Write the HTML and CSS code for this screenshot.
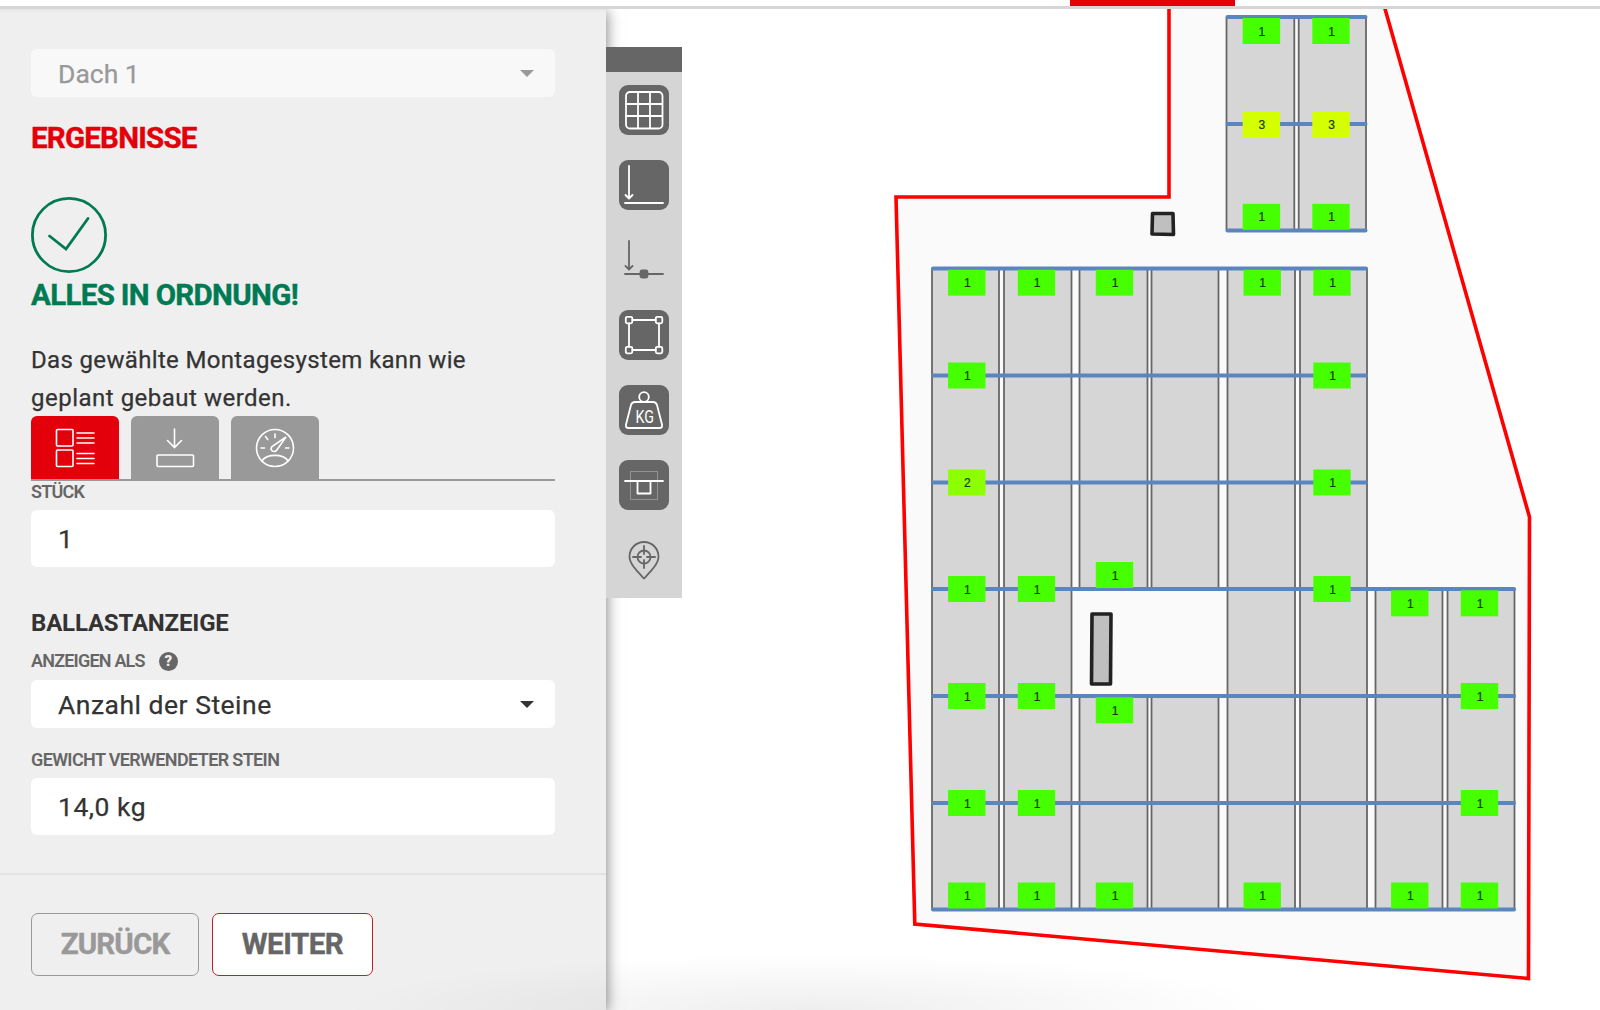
FILE: index.html
```html
<!DOCTYPE html>
<html lang="de">
<head>
<meta charset="utf-8">
<title>Ergebnisse</title>
<link rel="stylesheet" href="styles.css">
</head>
<body>
<header class="topbar"><div class="topbar-active"></div></header>
<div class="layout">
  <aside class="sidebar">
    <section class="results">
      <div class="field select disabled"><span class="t-dach">Dach 1</span><i class="caret"></i></div>
      <h1 class="title"><span class="t-erg">ERGEBNISSE</span></h1>
      <svg class="check" width="76" height="76" viewBox="0 0 76 76"><circle cx="38" cy="38" r="36.6"/><path d="M18.5 39 35 52 57 21.5"/></svg>
      <h2 class="status"><span class="t-ok">ALLES IN ORDNUNG!</span></h2>
      <p class="message"><span class="t-m1">Das gewählte Montagesystem kann wie</span><br><span class="t-m2">geplant gebaut werden.</span></p>
      <nav class="tabs">
        <a class="tab active"><svg width="40" height="40" viewBox="0 0 40 40"><rect x="1.5" y="1.500" width="16.500" height="16.500" rx="1"/><rect x="1.500" y="22" width="16.500" height="16.500" rx="1"/><path d="M22 5h17M22 10h17M22 15h17M22 25.500h17M22 30.500h17M22 35.500h17"/></svg></a>
        <a class="tab"><svg width="40" height="40" viewBox="0 0 40 40"><path d="M19.500 1v18M12.500 12.500l7 7 7-7"/><rect x="2" y="27" width="36.500" height="11.500" rx="1"/></svg></a>
        <a class="tab"><svg width="40" height="40" viewBox="0 0 40 40"><circle cx="20" cy="20" r="18.500"/><path d="M6.800 33C12 25.500 28 25.500 33.200 33M6 20h3.500M30.500 20H34M20 6v3.500M10.500 8.500l2.300 3M31 9 17 18.500c-2.500 3.500 1 6.500 4.500 4z"/></svg></a>
      </nav>
      <label class="label label-count"><span class="t-st">STÜCK</span></label>
      <div class="field input"><span>1</span></div>
      <h3 class="subtitle"><span class="t-bal">BALLASTANZEIGE</span></h3>
      <label class="label label-help"><span class="t-anz">ANZEIGEN ALS</span><b class="help">?</b></label>
      <div class="field select"><span class="t-sel">Anzahl der Steine</span><i class="caret"></i></div>
      <label class="label label-weight"><span class="t-gew">GEWICHT VERWENDETER STEIN</span></label>
      <div class="field input"><span class="t-kg">14,0 kg</span></div>
    </section>
    <footer class="actions">
      <button class="btn back"><span class="t-zur">ZURÜCK</span></button>
      <button class="btn next"><span class="t-wei">WEITER</span></button>
    </footer>
  </aside>
  <main class="plan">
    <svg class="roof" id="roof" width="994" height="1001" viewBox="606 9 994 1001"></svg>
    <div class="toolbar">
      <div class="toolbar-head"></div>
      <a class="tool on"><svg width="50" height="50" viewBox="0 0 50 50"><rect x="7" y="7" width="36.500" height="36.500" rx="4"/><path d="M19 7v36M31 7v36M7 19h36M7 31h36"/></svg></a>
      <a class="tool on"><svg width="50" height="50" viewBox="0 0 50 50"><path d="M10 6v32M6.500 35l3.500 3.500 3.500-3.500M6 43h38"/></svg></a>
      <a class="tool"><svg width="50" height="50" viewBox="0 0 50 50"><path d="M10 6v28M6.500 31l3.500 3.500 3.500-3.500M6 39h38"/><rect class="solid" x="21.500" y="35.500" width="7" height="7" rx="1.500"/></svg></a>
      <a class="tool on"><svg width="50" height="50" viewBox="0 0 50 50"><path d="M13.500 10h23M13.500 40h23M10 13.500v23M40 13.500v23"/><rect x="6.800" y="6.800" width="6.500" height="6.500" rx="1.500"/><rect x="36.800" y="6.800" width="6.500" height="6.500" rx="1.500"/><rect x="6.800" y="36.800" width="6.500" height="6.500" rx="1.500"/><rect x="36.800" y="36.800" width="6.500" height="6.500" rx="1.500"/></svg></a>
      <a class="tool on"><svg width="50" height="50" viewBox="0 0 50 50"><circle cx="25" cy="12" r="4.800"/><path d="M16 17h18q3 0 4 3l5 19.500q.8 3.500-2.500 3.500h-31q-3.300 0-2.500-3.500L12 20q1-3 4-3z"/><text x="16.500" y="37.500" textLength="18.500" lengthAdjust="spacingAndGlyphs">KG</text></svg></a>
      <a class="tool on"><svg width="50" height="50" viewBox="0 0 50 50"><rect class="faint" x="11.500" y="11.500" width="27" height="28"/><path d="M6 21h38M18.500 21v12.500h13V21"/></svg></a>
      <a class="tool"><svg width="50" height="50" viewBox="0 0 50 50"><path d="M25 43.500C18 36 10.500 29 10.500 21.500a14.500 14.500 0 0 1 29 0C39.500 29 32 36 25 43.500z"/><circle cx="25" cy="22" r="6.500"/><path d="M25 11v8M25 25v8M14 22h8M28 22h8"/></svg></a>
    </div>
  </main>
</div>
<div class="bottom-shade"></div>
<script src="plan.js"></script>
</body>
</html>
```
FILE: styles.css
```css
* { box-sizing: border-box; }
body { margin: 0; height: 1010px; overflow: hidden; background: #fff; color: #333; font-family: Roboto, "Liberation Sans", sans-serif; display: flex; flex-direction: column; }
h1, h2, h3, p { margin: 0; }
.topbar { height: 9px; flex: none; border-bottom: 3px solid #d6d6d6; }
.topbar-active { width: 165px; height: 6px; margin-left: 1070px; background: #e3000b; }
.layout { flex: 1; display: flex; }
.sidebar { width: 606px; background: linear-gradient(#e4e4e4, #efefef 3px); display: flex; flex-direction: column; box-shadow: 0 2px 14px rgba(0,0,0,.55); clip-path: inset(0 -24px 0 0); z-index: 1; }
.results { height: 866px; padding: 40px 51px 0 31px; border-bottom: 2px solid #e1e3e5; display: flex; flex-direction: column; }
.field { flex: none; height: 48px; border-radius: 6px; background: #fff; padding: 0 21px 0 27px; display: flex; align-items: center; justify-content: space-between; font-size: 26.500px; -webkit-text-stroke: .25px; }
.input { height: 57px; }
.disabled { color: #999; background: #f8f8f8; height: 48px; }
.caret { border: 7px solid transparent; border-top: 7px solid currentColor; border-bottom: 0; }
.title, .status { font-size: 29.500px; line-height: 36px; font-weight: 700; white-space: nowrap; -webkit-text-stroke: .4px; }
.title { color: #e3000b; margin-top: 23px; }
.check { margin-top: 41px; fill: none; stroke: #007a53; stroke-width: 2.800; stroke-linecap: round; flex: none; }
.status { color: #007a53; margin-top: 4px; }
.message { margin-top: 29px; font-size: 24px; line-height: 37.500px; white-space: nowrap; -webkit-text-stroke: .25px; }
.tabs { height: 65px; margin-top: -1px; flex: none; display: flex; gap: 12px; border-bottom: 2px solid #999; }
.tab { width: 88px; height: 63px; border-radius: 6px 6px 0 0; background: #999; display: flex; align-items: center; justify-content: center; }
.tab.active { background: #e3000b; }
.tab svg { fill: none; stroke: #fff; stroke-width: 1.600; stroke-linecap: round; }
.label { flex: none; font-size: 18px; line-height: 20px; font-weight: 600; color: #666; white-space: nowrap; display: flex; align-items: center; }
.label-count { margin: 1px 0 8px; }
.label-help { margin: 13px 0 9px; }
.label-weight { margin: 22px 0 8px; }
.subtitle { font-size: 24px; line-height: 30px; margin-top: 41px; }
.help { width: 19px; height: 19px; border-radius: 50%; background: #666; color: #efefef; font-size: 15px; line-height: 19px; text-align: center; margin-left: 14px; }
.t-erg { letter-spacing: -.77px; }
.t-ok { letter-spacing: -.66px; }
.t-m1 { letter-spacing: .34px; }
.t-m2 { letter-spacing: .5px; }
.t-st, .t-anz { letter-spacing: -.8px; }
.t-gew { letter-spacing: -.63px; }
.t-bal { letter-spacing: -.18px; }
.t-sel, .t-kg { letter-spacing: .5px; }
.t-zur { letter-spacing: -.85px; }
.t-wei { letter-spacing: -.5px; }
.actions { flex: 1; display: flex; gap: 13px; padding: 38px 31px 0; }
.btn { height: 63px; border-radius: 7px; border: 1.500px solid #999; padding: 0 0 1px; font: 700 29.500px/36px Roboto, "Liberation Sans", sans-serif; background: #efefef; color: #999; white-space: nowrap; -webkit-text-stroke: .4px; }
.back { width: 168px; }
.next { width: 161px; color: #666; background: #fff; border-color: #cc1a22; }
.plan { position: relative; flex: 1; z-index: 2; }
.roof { display: block; }
.toolbar { position: absolute; left: 0; top: 38px; width: 76px; height: 551px; background: #d5d5d5; display: flex; flex-direction: column; align-items: center; gap: 25px; }
.toolbar-head { height: 25px; width: 100%; background: #666; margin-bottom: -12px; flex: none; }
.tool { height: 50px; width: 50px; border-radius: 9px; flex: none; color: #666; }
.on { background: #666; color: #fff; }
.tool svg { display: block; fill: none; stroke: currentColor; stroke-width: 1.800; stroke-linecap: round; stroke-linejoin: round; }
.tool text { fill: #fff; stroke: none; font-size: 18px; }
.tool .solid { fill: #666; }
.tool .faint { stroke: #999; stroke-width: 1; stroke-dasharray: 1 1; }
.bottom-shade { position: absolute; z-index: 3; left: 340px; bottom: 0; width: 940px; height: 56px; pointer-events: none; background: radial-gradient(ellipse 50% 100% at 50% 100%, rgba(0,0,0,.065), transparent); }
.area { fill: #fafafa; }
.border { fill: none; stroke: #f00; stroke-width: 3.600; }
.obstacle { fill: #bfbfbf; stroke: #222; stroke-width: 3.600; stroke-linejoin: round; }
.panel { fill: #d6d6d6; }
.edge { stroke: #666; stroke-width: 1.800; }
.rail { stroke: #5b85bf; stroke-width: 4; stroke-linecap: round; }
.count { font: 12px "Liberation Sans", sans-serif; text-anchor: middle; fill: #123a08; stroke: #123a08; stroke-width: .2; }
.b1 { fill: #46ff00; }
.b2 { fill: #8cff00; }
.b3 { fill: #d4ff00; }
```
FILE: plan.js
```javascript
const svg = document.getElementById('roof');
const rows = [268.5, 375.5, 482.5, 589, 696, 803, 909.5];
const cols = [[932, 999], [1004, 1071.5], [1079.5, 1147.5], [1151.5, 1218.5], [1227.5, 1295], [1300, 1367], [1375.5, 1442.5], [1447.5, 1514.5]];
const top2 = [[1226.5, 1294.3], [1298.7, 1366]];
const topRows = [17, 124, 230.5];
let out = '<polygon class="area" points="1169,0 1169,197 896,197 914.8,924 1528.500,978.500 1529.500,517 1382.500,0"/>';

function panel([a, b], y1, y2) {
  out += `<rect class="panel" x="${a}" y="${y1}" width="${b - a}" height="${y2 - y1}"/>`;
  for (const x of [a, b]) out += `<line class="edge" x1="${x}" x2="${x}" y1="${y1}" y2="${y2}"/>`;
}
function rail(a, b, y) {
  out += `<line class="rail" x1="${a + 1}" x2="${b - 1}" y1="${y}" y2="${y}"/>`;
}
function badge(x, y, n = 1) {
  out += `<rect class="b${n}" x="${x - 18.7}" y="${y - 13}" width="37.400" height="26"/><text class="count" x="${x + 0.5}" y="${y + 4.5}">${n}</text>`;
}

cols.forEach((c, i) => {
  if (i > 5) panel(c, rows[3], rows[6]);
  else if (i === 2 || i === 3) { panel(c, rows[0], rows[3]); panel(c, rows[4], rows[6]); }
  else panel(c, rows[0], rows[6]);
});
top2.forEach(c => panel(c, topRows[0], topRows[2]));
rows.forEach((y, i) => rail(932, i < 3 ? 1367 : 1515, y));
topRows.forEach(y => rail(1226.5, 1366.5, y));

const T = 282.7, B = 895.5;
const marks = [
  [966.8, [T, 375.5, [482.5, 2], 589, 696, 803, B]],
  [1036.5, [T, 589, 696, 803, B]],
  [1114.5, [T, 575, 710.3, B]],
  [1262.2, [T, B]],
  [1332, [T, 375.5, 482.5, 589]],
  [1409.8, [603.3, B]],
  [1479.5, [603.3, 696, 803, B]],
  [1261.4, [31, [124, 3], 216.8]],
  [1331, [31, [124, 3], 216.8]]
];
marks.forEach(([x, ys]) => ys.forEach(y => Array.isArray(y) ? badge(x, y[0], y[1]) : badge(x, y)));

out += '<polygon class="obstacle" points="1152.500,213.500 1173,213.500 1173.500,234.500 1152,234"/>';
out += '<polygon class="obstacle" points="1092,614 1111,614 1110.500,684 1091.500,684"/>';
out += '<polyline class="border" points="1169,0 1169,197 896,197 914.8,924 1528.500,978.500 1529.500,517 1382.500,0"/>';
svg.innerHTML = out;
```
